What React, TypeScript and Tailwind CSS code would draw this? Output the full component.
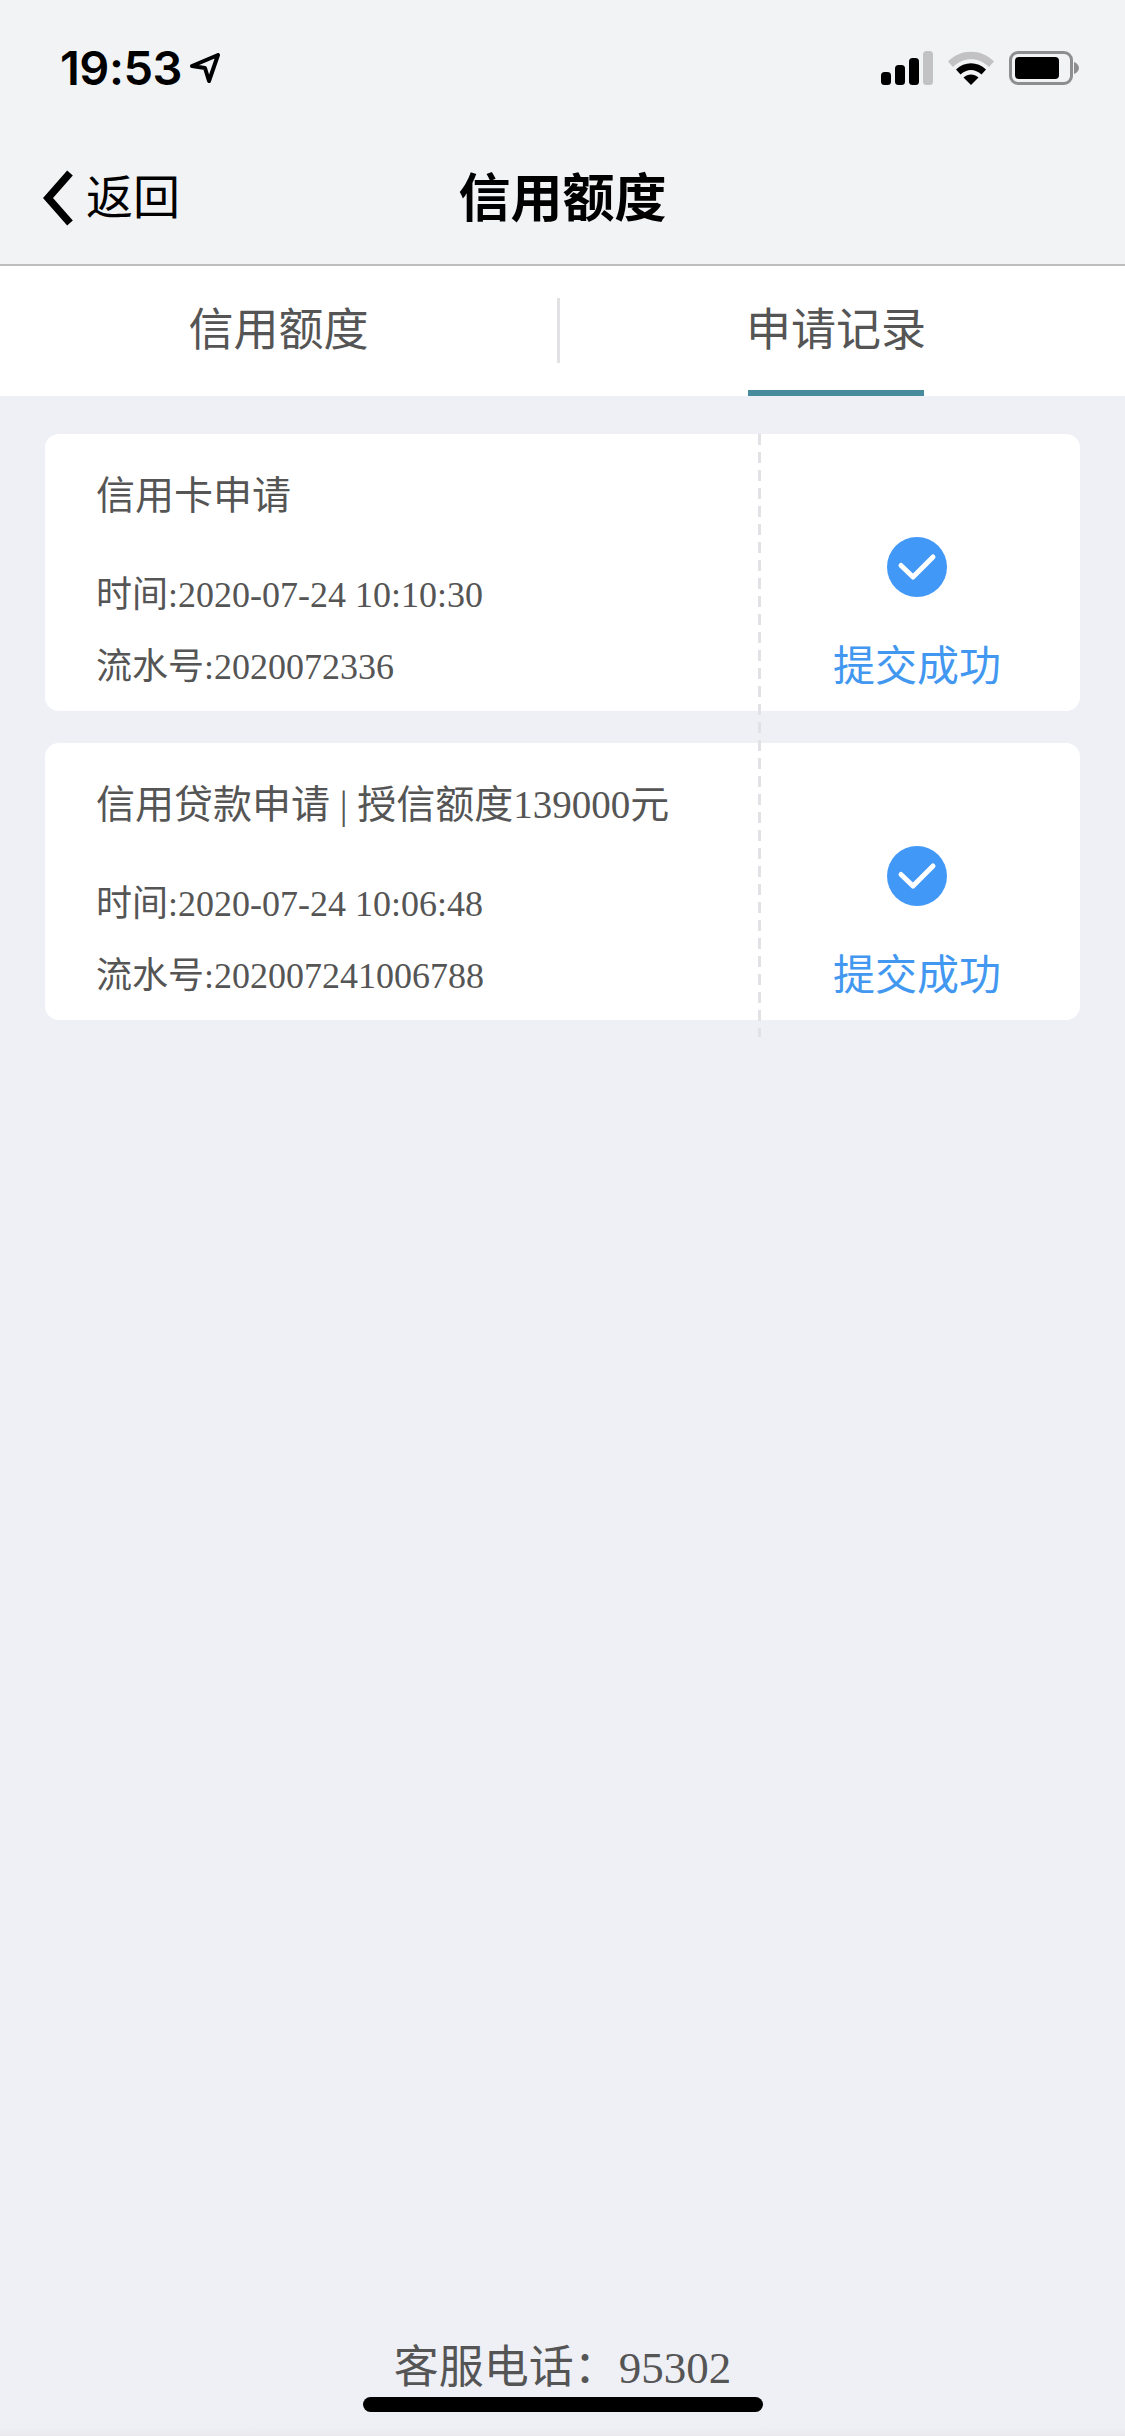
import React from 'react';

const FONT = "font-['Liberation_Serif','Noto_Sans_CJK_SC',serif]";

const records = [
  { title: '信用卡申请', time: '2020-07-24 10:10:30', serial: '2020072336' },
  { title: '信用贷款申请 | 授信额度139000元', time: '2020-07-24 10:06:48', serial: '202007241006788' },
];

function StatusIcons() {
  return (
    <div className="flex items-center gap-[15px]">
      <svg width="52" height="34" viewBox="0 0 52 34">
        <rect x="0" y="21" width="10" height="13" rx="3.5" fill="#000" />
        <rect x="14" y="14" width="10" height="20" rx="3.5" fill="#000" />
        <rect x="28" y="7" width="10" height="27" rx="3.5" fill="#000" />
        <rect x="42" y="0" width="10" height="34" rx="3.5" fill="#c2c2c4" />
      </svg>
      <svg width="46" height="34" viewBox="0 0 46 34">
        <path d="M0 10.5C12.5 -2.5 33.5 -2.5 46 10.5L41 16C31 5.5 15 5.5 5 16Z" fill="#c2c2c4" />
        <path d="M8 18.5C16.5 10 29.5 10 38 18.5L33.5 23.5C27 17.5 19 17.5 12.5 23.5Z" fill="#000" />
        <path d="M15.5 26.5C20 22.5 26 22.5 30.5 26.5L23 34Z" fill="#000" />
      </svg>
      <div className="flex items-center">
        <div className="flex h-[34px] w-[64px] items-center rounded-[9px] border-[3px] border-[#8e8e90] pl-[3px]">
          <div className="h-[22px] w-[44px] rounded-[4px] bg-black" />
        </div>
        <svg width="5" height="12" viewBox="0 0 5 12" className="ml-[1px]">
          <path d="M0 0C3 1 5 3.5 5 6C5 8.5 3 11 0 12Z" fill="#8e8e90" />
        </svg>
      </div>
    </div>
  );
}

function RecordCard({ title, time, serial }: { title: string; time: string; serial: string }) {
  return (
    <div className="flex h-[277px] rounded-[14px] bg-white">
      <div className="flex-1 pl-[51px] pt-[39px] text-[#555555]">
        <div className="h-[46px] text-[39px] leading-[46px] whitespace-nowrap">{title}</div>
        <div className="mt-[53px] h-[46px] text-[36px] leading-[46px] whitespace-nowrap">时间:{time}</div>
        <div className="mt-[26px] h-[46px] text-[36px] leading-[46px] whitespace-nowrap">流水号:{serial}</div>
      </div>
      <div className="flex w-[326px] flex-col items-center pt-[103px]">
        <svg width="60" height="60" viewBox="0 0 60 60">
          <circle cx="30" cy="30" r="30" fill="#4298f7" />
          <path d="M14 28.5L26 40L46 20" fill="none" stroke="#fff" strokeWidth="5" strokeLinecap="round" strokeLinejoin="round" />
        </svg>
        <div className="mt-[45px] text-[42px] leading-[50px] text-[#4298f0]">提交成功</div>
      </div>
    </div>
  );
}

export default function App() {
  return (
    <div className={`flex h-[2436px] w-[1125px] flex-col bg-[#eff0f5] ${FONT}`}>
      <div className="h-[264px] border-b-[2px] border-[#bdbdc0] bg-[#f2f3f5] box-content">
        <div className="flex h-[136px] items-center justify-between pl-[60px] pr-[46px]">
          <div className="flex items-center gap-[8px] font-['Inter',sans-serif] text-[47px] font-semibold tracking-[-0.5px] text-black">
            <span>19:53</span>
            <svg width="30" height="30" viewBox="0 0 30 30">
              <path d="M2 13L28 2L19 28L15 15Z" fill="none" stroke="#000" strokeWidth="4" strokeLinejoin="round" />
            </svg>
          </div>
          <StatusIcons />
        </div>
        <div className="relative flex h-[128px] items-center justify-center">
          <div className="absolute left-[42px] top-[34px] flex items-center gap-[11px]">
            <svg width="33" height="56" viewBox="0 0 33 56">
              <path d="M28 3L6 28L28 53" fill="none" stroke="#000" strokeWidth="7.5" />
            </svg>
            <span className="text-[47px] leading-[52px] text-black">返回</span>
          </div>
          <span className="text-[52px] font-bold leading-[60px] text-black">信用额度</span>
        </div>
      </div>

      <div className="flex h-[130px] bg-white text-[45px] text-[#555555]">
        <div className="flex w-[557px] items-center justify-center pt-[2px]">
          <span>信用额度</span>
        </div>
        <div className="mt-[32px] h-[65px] w-[3px] bg-[#e2e2e4]" />
        <div className="flex flex-1 pl-[188px]">
          <div className="flex h-full w-[176px] items-center justify-center border-b-[6px] border-[#468c9c] pt-[8px]">
            <span className="whitespace-nowrap">申请记录</span>
          </div>
        </div>
      </div>

      <div className="relative mx-[45px] mt-[38px] flex flex-col gap-[32px]">
        {records.map((r) => (
          <RecordCard key={r.serial} title={r.title} time={r.time} serial={r.serial} />
        ))}
        <div className="absolute bottom-[-17px] left-[713px] top-0 w-[3px] bg-[repeating-linear-gradient(to_bottom,#e2e2e6_0,#e2e2e6_11px,transparent_11px,transparent_18px)]" />
      </div>

      <div className="mt-auto flex flex-col items-center bg-[linear-gradient(to_bottom,#eff0f5_0,#eff0f5_85px,#e9e9ed_100%)]">
        <div className="text-[45px] leading-[52px] text-[#555555]">客服电话：95302</div>
        <div className="mb-[24px] mt-[3px] h-[15px] w-[400px] rounded-full bg-black" />
      </div>
    </div>
  );
}
